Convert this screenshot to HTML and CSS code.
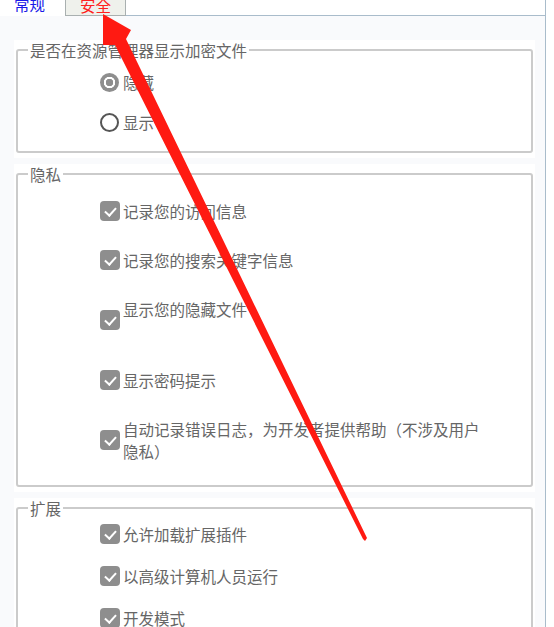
FILE: index.html
```html
<!DOCTYPE html>
<html>
	<head>
		<meta charset="UTF-8">
		<title>安全设置</title>
		<link rel="stylesheet" href="styles.css">
	</head>
	<body>
		<div class="tabs">
			<div class="tab tab-normal">常规</div>
			<div class="tab tab-active">安全</div>
			<div class="tab-fill"></div>
		</div>
		<div class="panel">
			<div class="section">
				<fieldset class="group group-show">
					<legend>是否在资源管理器显示加密文件</legend>
					<div class="options">
						<div class="option"><span class="radio checked"></span><span class="label">隐藏</span></div>
						<div class="option"><span class="radio"></span><span class="label">显示</span></div>
					</div>
				</fieldset>
			</div>
			<div class="section">
				<fieldset class="group group-privacy">
					<legend>隐私</legend>
					<div class="options">
						<div class="option"><span class="check"></span><span class="label">记录您的访问信息</span></div>
						<div class="option"><span class="check"></span><span class="label">记录您的搜索关键字信息</span></div>
						<div class="option"><span class="check"></span><span class="label">显示您的隐藏文件<br>&nbsp;</span></div>
						<div class="option"><span class="check"></span><span class="label">显示密码提示</span></div>
						<div class="option"><span class="check"></span><span class="label">自动记录错误日志，为开发者提供帮助（不涉及用户隐私）</span></div>
					</div>
				</fieldset>
			</div>
			<div class="section">
				<fieldset class="group group-ext">
					<legend>扩展</legend>
					<div class="options">
						<div class="option"><span class="check"></span><span class="label">允许加载扩展插件</span></div>
						<div class="option"><span class="check"></span><span class="label">以高级计算机人员运行</span></div>
						<div class="option"><span class="check"></span><span class="label">开发模式</span></div>
					</div>
				</fieldset>
			</div>
		</div>
		<!-- 标注箭头 -->
		<svg class="arrow" width="554" height="627" viewBox="0 0 554 627">
			<polygon points="103,14 131,30 126,39 367,538 365,541 363,539 115,45 103,45" fill="#ff1a12"/>
		</svg>
	</body>
</html>
```
FILE: styles.css
```css
*{
	padding: 0;
	margin: 0;
	box-sizing: border-box;
}
body{
	font-family: "Noto Sans CJK SC", sans-serif;
	font-size: 15.5px;
	color: #666666;
	background: #FFFFFF;
	overflow: hidden;
}
.tabs{
	display: flex;
	width: 546px;
	height: 22px;
	margin-top: -6px;
}
.tab{
	line-height: 20px;
}
.tab-normal{
	width: 65px;
	padding-left: 14px;
	color: #1a1ae8;
}
.tab-active{
	width: 61px;
	border: 1px solid #a9b0b0;
	background: #eff1ec;
	color: #ff2020;
	text-align: center;
}
.tab-fill{
	flex: 1;
	border-bottom: 1px solid #a9bccb;
	border-right: 1px solid #a9bccb;
}
.panel{
	width: 546px;
	min-height: 640px;
	padding-top: 24px;
	background: #f9fafc;
	border-right: 1px solid #a9bccb;
}
.section{
	margin: 0 10px 6px 14px;
	padding: 0 2px 5px;
	background: #FFFFFF;
}
.group{
	border: 2px solid #cbcbcb;
	border-radius: 3px;
	padding: 0 10px 18px 10px;
	min-width: 0;
}
.group legend{
	padding: 0 2px;
	line-height: 20px;
}
.options{
	display: flex;
	flex-direction: column;
	gap: 18px;
	padding-top: 11px;
	margin-left: 72px;
}
.group-privacy{
	padding-bottom: 23px;
}
.group-privacy .options{
	gap: 27px;
	padding-top: 16px;
}
.group-ext .options{
	gap: 20px;
	padding-top: 5px;
}
.option{
	display: flex;
	align-items: center;
}
.label{
	line-height: 22px;
	max-width: 362px;
	margin-left: 3px;
}
.check{
	width: 20px;
	height: 20px;
	border-radius: 4px;
	background: #8e8e8e;
	flex: none;
	position: relative;
}
.check:after{
	content: "";
	position: absolute;
	left: 5px;
	top: 4px;
	width: 9px;
	height: 5px;
	border-left: 2.5px solid #FFFFFF;
	border-bottom: 2.5px solid #FFFFFF;
	transform: rotate(-48deg);
	transform-origin: 50% 50%;
	margin-top: 2px;
}
.radio{
	width: 19px;
	height: 19px;
	border-radius: 50%;
	border: 2.5px solid #555555;
	background: #FFFFFF;
	flex: none;
	margin-right: 1px;
}
.radio.checked{
	border: none;
	background: radial-gradient(circle, #8e8e8e 0 3.5px, #FFFFFF 4px 5.5px, #8e8e8e 6px);
}
.arrow{
	position: absolute;
	left: 0;
	top: 0;
	pointer-events: none;
}
```
